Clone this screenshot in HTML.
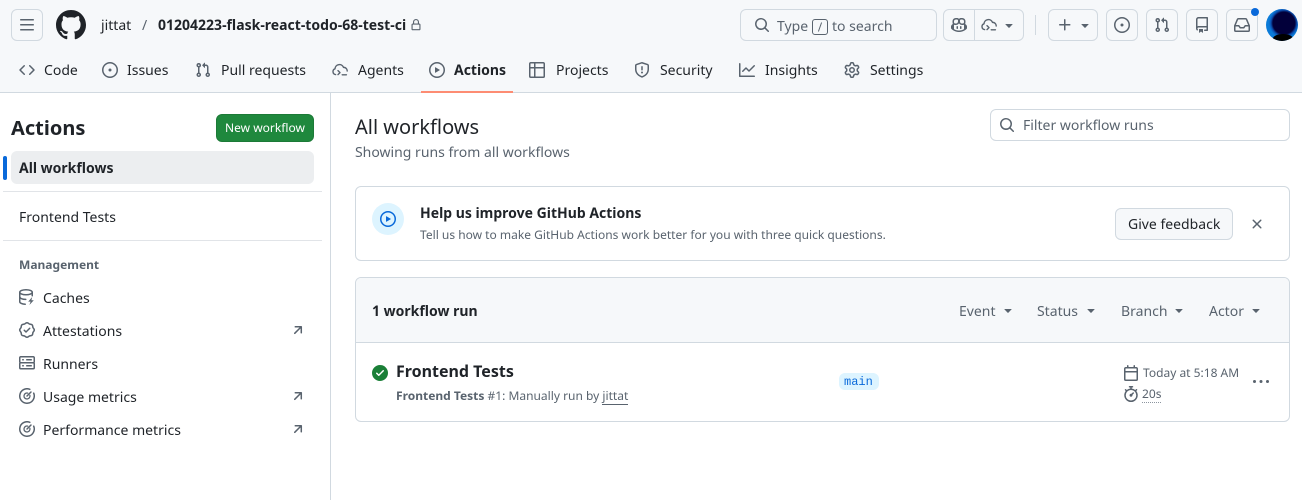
<!DOCTYPE html>
<html lang="en"><head><meta charset="utf-8"><title>Workflow runs</title>
<style>
html,body{margin:0;padding:0;background:#fff}
body{width:1302px;height:500px;position:relative;overflow:hidden;font-family:"Noto Sans","Liberation Sans","Noto Sans CJK JP",sans-serif;font-size:14px;color:#1f2328}
.t{position:absolute;white-space:nowrap;line-height:20px;height:20px}
.b{position:absolute;box-sizing:border-box;border:1px solid #d1d9e0;border-radius:6px}
.r{position:absolute}
svg{position:absolute;fill:#59636e;overflow:visible}
.m{color:#59636e}
.w{font-weight:700}
</style></head><body>
<svg width="0" height="0" style="position:absolute"><defs>
<symbol id="caret" viewBox="0 0 16 16"><path d="m4.427 7.427 3.396 3.396a.25.25 0 0 0 .354 0l3.396-3.396A.25.25 0 0 0 11.396 7H4.604a.25.25 0 0 0-.177.427Z"/></symbol>
<symbol id="issue" viewBox="0 0 16 16"><path d="M8 9.5a1.5 1.5 0 1 0 0-3 1.5 1.5 0 0 0 0 3Z"/><path d="M8 0a8 8 0 1 1 0 16A8 8 0 0 1 8 0ZM1.5 8a6.5 6.5 0 1 0 13 0 6.5 6.5 0 0 0-13 0Z"/></symbol>
<symbol id="pr" viewBox="0 0 16 16"><path d="M1.5 3.25a2.25 2.25 0 1 1 3 2.122v5.256a2.251 2.251 0 1 1-1.5 0V5.372A2.25 2.25 0 0 1 1.5 3.25Zm5.677-.177L9.573.677A.25.25 0 0 1 10 .854V2.5h1A2.5 2.5 0 0 1 13.5 5v5.628a2.251 2.251 0 1 1-1.5 0V5a1 1 0 0 0-1-1h-1v1.646a.25.25 0 0 1-.427.177L7.177 3.427a.25.25 0 0 1 0-.354ZM3.75 2.5a.75.75 0 1 0 0 1.5.75.75 0 0 0 0-1.5Zm0 9.5a.75.75 0 1 0 0 1.5.75.75 0 0 0 0-1.5Zm8.25.75a.75.75 0 1 0 1.5 0 .75.75 0 0 0-1.5 0Z"/></symbol>
<symbol id="play" viewBox="0 0 16 16"><path d="M8 0a8 8 0 1 1 0 16A8 8 0 0 1 8 0ZM1.5 8a6.5 6.5 0 1 0 13 0 6.5 6.5 0 0 0-13 0Zm4.879-2.773 4.264 2.559a.25.25 0 0 1 0 .428l-4.264 2.559A.25.25 0 0 1 6 10.559V5.442a.25.25 0 0 1 .379-.215Z"/></symbol>
<symbol id="search" viewBox="0 0 16 16"><path d="M10.68 11.74a6 6 0 0 1-7.922-8.982 6 6 0 0 1 8.982 7.922l3.04 3.04a.749.749 0 0 1-.326 1.275.749.749 0 0 1-.734-.215ZM11.5 7a4.499 4.499 0 1 0-8.997 0A4.499 4.499 0 0 0 11.5 7Z"/></symbol>
<symbol id="agent" viewBox="0 0 16 16"><g fill="none" stroke="currentColor" stroke-width="1.4" stroke-linecap="round" stroke-linejoin="round"><path d="M3.6 12.6A3 3 0 0 1 3 6.8 4.4 4.4 0 0 1 11.5 5.4 3.4 3.4 0 0 1 15.2 9"/><path d="M6 8.6l2 2-2 2"/><path d="M10.2 12.8h4.2"/></g></symbol>
<symbol id="meter" viewBox="0 0 16 16"><g fill="none" stroke="#59636e" stroke-linecap="round"><path stroke-width="1.5" d="M14.7 5.2A7.25 7.25 0 1 1 10.8 1.3"/><path stroke-width="1.3" d="M10.9 7.3A3 3 0 1 1 8.7 5.1"/><path stroke-width="1.5" d="M8 8l4-4"/></g></symbol>
<symbol id="arrow" viewBox="0 0 16 16"><path d="M4.53 4.75A.75.75 0 0 1 5.28 4h6.01a.75.75 0 0 1 .75.75v6.01a.75.75 0 0 1-1.5 0v-4.2l-5.26 5.261a.749.749 0 0 1-1.275-.326.749.749 0 0 1 .215-.734L9.48 5.5h-4.2a.75.75 0 0 1-.75-.75Z"/></symbol>
</defs></svg>

<!-- header -->
<div class="r" style="left:0;top:0;width:1302px;height:92px;background:#f6f8fa"></div>
<div class="r" style="left:0;top:92px;width:1302px;height:1px;background:#d1d9e0"></div>

<div class="b" style="left:11px;top:9px;width:32px;height:32px"></div>
<svg style="left:19px;top:17px" width="16" height="16" viewBox="0 0 16 16"><path d="M1 2.75A.75.75 0 0 1 1.75 2h12.5a.75.75 0 0 1 0 1.5H1.75A.75.75 0 0 1 1 2.75Zm0 5A.75.75 0 0 1 1.75 7h12.5a.75.75 0 0 1 0 1.5H1.75A.75.75 0 0 1 1 7.75ZM1.75 12h12.5a.75.75 0 0 1 0 1.5H1.75a.75.75 0 0 1 0-1.5Z"/></svg>
<svg style="left:56px;top:10px;fill:#1f2328" width="30" height="30" viewBox="0 0 16 16"><path d="M8 0c4.42 0 8 3.58 8 8a8.013 8.013 0 0 1-5.45 7.59c-.4.08-.55-.17-.55-.38 0-.27.01-1.13.01-2.2 0-.75-.25-1.23-.54-1.48 1.78-.2 3.65-.88 3.65-3.95 0-.88-.31-1.59-.82-2.15.08-.2.36-1.02-.08-2.12 0 0-.67-.22-2.2.82-.64-.18-1.32-.27-2-.27-.68 0-1.36.09-2 .27-1.53-1.03-2.2-.82-2.2-.82-.44 1.1-.16 1.92-.08 2.12-.51.56-.82 1.28-.82 2.15 0 3.06 1.86 3.75 3.64 3.95-.23.2-.44.55-.51 1.07-.46.21-1.61.55-2.33-.66-.15-.24-.6-.83-1.23-.82-.67.01-.27.38.01.53.34.19.73.9.82 1.13.16.45.68 1.31 2.69.94 0 .67.01 1.3.01 1.49 0 .21-.15.45-.55.38A7.995 7.995 0 0 1 0 8c0-4.42 3.58-8 8-8Z"/></svg>
<span class="t" style="left:101px;top:16px">jittat</span>
<span class="t m" style="left:142px;top:16px">/</span>
<span class="t w" style="left:158px;top:16px">01204223-flask-react-todo-68-test-ci</span>
<svg style="left:410px;top:19px" width="12" height="12" viewBox="0 0 16 16"><path d="M4 4a4 4 0 0 1 8 0v2h.25c.966 0 1.75.784 1.75 1.75v5.5A1.75 1.75 0 0 1 12.25 15h-8.5A1.75 1.75 0 0 1 2 13.25v-5.5C2 6.784 2.784 6 3.75 6H4Zm8.25 3.5h-8.5a.25.25 0 0 0-.25.25v5.5c0 .138.112.25.25.25h8.5a.25.25 0 0 0 .25-.25v-5.5a.25.25 0 0 0-.25-.25ZM10.5 6V4a2.5 2.5 0 1 0-5 0v2Z"/></svg>

<div class="b" style="left:740px;top:9px;width:197px;height:32px"></div>
<svg style="left:754px;top:17px" width="16" height="16"><use href="#search"/></svg>
<span class="t m" style="left:777px;top:17px">Type</span>
<div class="b" style="left:812px;top:19px;width:16px;height:16px;border-color:#59636e;border-radius:3px"></div>
<svg style="left:816px;top:22px" width="8" height="10"><path d="M5.6 .5 2.4 9.5" stroke="#59636e" stroke-width="1" fill="none"/></svg>
<span class="t m" style="left:832px;top:17px">to search</span>

<div class="b" style="left:943px;top:9px;width:81px;height:32px"></div>
<div class="r" style="left:974px;top:10px;width:1px;height:30px;background:#d1d9e0"></div>
<svg style="left:951px;top:17px" width="16" height="16" viewBox="0 0 16 16"><path d="M7.998 15.035c-4.562 0-7.873-2.914-7.998-3.749V9.338c.085-.628.677-1.686 1.588-2.065.013-.07.024-.143.036-.218.029-.183.06-.384.126-.612-.201-.508-.254-1.084-.254-1.656 0-.87.128-1.769.693-2.484.579-.733 1.494-1.124 2.724-1.261 1.206-.134 2.262.034 2.944.765.05.053.096.108.139.165.044-.057.094-.112.143-.165.682-.731 1.738-.899 2.944-.765 1.23.137 2.145.528 2.724 1.261.566.715.693 1.614.693 2.484 0 .572-.053 1.148-.254 1.656.066.228.098.429.126.612.012.076.024.148.037.218.924.385 1.522 1.471 1.591 2.095v1.872c0 .766-3.351 3.795-8.002 3.795Zm0-1.485c2.28 0 4.584-1.11 5.002-1.433V7.862l-.023-.116c-.49.21-1.075.291-1.727.291-1.146 0-2.059-.327-2.71-.991A3.222 3.222 0 0 1 8 6.303a3.24 3.24 0 0 1-.544.743c-.65.664-1.563.991-2.71.991-.652 0-1.236-.081-1.727-.291l-.023.116v4.255c.419.323 2.722 1.433 5.002 1.433ZM6.762 2.83c-.193-.206-.637-.413-1.682-.297-1.019.113-1.479.404-1.713.7-.247.312-.369.789-.369 1.554 0 .793.129 1.171.308 1.371.162.181.519.379 1.442.379.853 0 1.339-.235 1.638-.54.315-.322.527-.827.617-1.553.117-.935-.037-1.395-.241-1.614Zm4.155-.297c-1.044-.116-1.488.091-1.681.297-.204.219-.359.679-.242 1.614.091.726.303 1.231.618 1.553.299.305.784.54 1.638.54.922 0 1.28-.198 1.442-.379.179-.2.308-.578.308-1.371 0-.765-.123-1.242-.37-1.554-.233-.296-.693-.587-1.713-.7Z"/><path d="M6.25 9.037a.75.75 0 0 1 .75.75v1.501a.75.75 0 0 1-1.5 0V9.787a.75.75 0 0 1 .75-.75Zm4.25.75v1.501a.75.75 0 0 1-1.5 0V9.787a.75.75 0 0 1 1.5 0Z"/></svg>
<svg style="left:981px;top:17px;color:#59636e;fill:none" width="16" height="16"><use href="#agent"/></svg>
<svg style="left:1001px;top:17px" width="16" height="16"><use href="#caret"/></svg>
<div class="r" style="left:1035px;top:15px;width:1px;height:20px;background:#d1d9e0"></div>

<div class="b" style="left:1048px;top:9px;width:50px;height:32px"></div>
<svg style="left:1057px;top:17px" width="16" height="16" viewBox="0 0 16 16"><path d="M7.75 2a.75.75 0 0 1 .75.75V7h4.25a.75.75 0 0 1 0 1.5H8.5v4.25a.75.75 0 0 1-1.5 0V8.5H2.75a.75.75 0 0 1 0-1.5H7V2.75A.75.75 0 0 1 7.75 2Z"/></svg>
<svg style="left:1077px;top:17px" width="16" height="16"><use href="#caret"/></svg>
<div class="b" style="left:1106px;top:9px;width:32px;height:32px"></div>
<svg style="left:1114px;top:17px" width="16" height="16"><use href="#issue"/></svg>
<div class="b" style="left:1146px;top:9px;width:32px;height:32px"></div>
<svg style="left:1154px;top:17px" width="16" height="16"><use href="#pr"/></svg>
<div class="b" style="left:1186px;top:9px;width:32px;height:32px"></div>
<svg style="left:1194px;top:17px" width="16" height="16" viewBox="0 0 16 16"><path d="M2 2.5A2.5 2.5 0 0 1 4.5 0h8.75a.75.75 0 0 1 .75.75v12.5a.75.75 0 0 1-.75.75h-2.5a.75.75 0 0 1 0-1.5h1.75v-2h-8a1 1 0 0 0-.714 1.7.75.75 0 1 1-1.072 1.05A2.495 2.495 0 0 1 2 11.5Zm10.5-1h-8a1 1 0 0 0-1 1v6.708A2.486 2.486 0 0 1 4.5 9h8ZM5 12.25a.25.25 0 0 1 .25-.25h3.5a.25.25 0 0 1 .25.25v3.25a.25.25 0 0 1-.4.2l-1.45-1.087a.249.249 0 0 0-.3 0L5.4 15.7a.25.25 0 0 1-.4-.2Z"/></svg>
<div class="b" style="left:1226px;top:9px;width:32px;height:32px"></div>
<svg style="left:1234px;top:17px" width="16" height="16" viewBox="0 0 16 16"><path d="M2.8 2.06A1.75 1.75 0 0 1 4.41 1h7.18c.7 0 1.333.417 1.61 1.06l2.74 6.395c.04.093.06.194.06.295v4.5A1.75 1.75 0 0 1 14.25 15H1.75A1.75 1.75 0 0 1 0 13.25v-4.5c0-.101.02-.202.06-.295Zm1.61.44a.25.25 0 0 0-.23.152L1.887 8H4.75a.75.75 0 0 1 .6.3L6.625 10h2.75l1.275-1.7a.75.75 0 0 1 .6-.3h2.863L11.82 2.652a.25.25 0 0 0-.23-.152Zm10.09 7h-2.875l-1.275 1.7a.75.75 0 0 1-.6.3h-3.5a.75.75 0 0 1-.6-.3L4.375 9.5H1.5v3.75c0 .138.112.25.25.25h12.5a.25.25 0 0 0 .25-.25Z"/></svg>
<div class="r" style="left:1251px;top:8px;width:8px;height:8px;border-radius:50%;background:#0969da"></div>
<div class="r" style="left:1266px;top:9px;width:32px;height:32px;border-radius:50%;background:radial-gradient(circle 20px at 56% 44%,#02003a 0,#02003a 11px,#0b4fb0 13px,#0a7bd8 15px);overflow:hidden"><div class="r" style="left:7px;top:25px;width:20px;height:9px;background:#000;border-radius:50%"></div></div>

<!-- tabs -->
<svg style="left:19px;top:62px" width="16" height="16" viewBox="0 0 16 16"><path d="m11.28 3.22 4.25 4.25a.75.75 0 0 1 0 1.06l-4.25 4.25a.749.749 0 0 1-1.275-.326.749.749 0 0 1 .215-.734L13.94 8l-3.72-3.72a.749.749 0 0 1 .326-1.275.749.749 0 0 1 .734.215Zm-6.56 0a.751.751 0 0 1 1.042.018.751.751 0 0 1 .018 1.042L2.06 8l3.72 3.72a.749.749 0 0 1-.326 1.275.749.749 0 0 1-.734-.215L.47 8.53a.75.75 0 0 1 0-1.06Z"/></svg>
<span class="t" style="left:44px;top:61px">Code</span>
<svg style="left:102px;top:62px" width="16" height="16"><use href="#issue"/></svg>
<span class="t" style="left:127px;top:61px">Issues</span>
<svg style="left:195px;top:62px" width="16" height="16"><use href="#pr"/></svg>
<span class="t" style="left:221px;top:61px">Pull requests</span>
<svg style="left:332px;top:62px;color:#59636e;fill:none" width="16" height="16"><use href="#agent"/></svg>
<span class="t" style="left:358px;top:61px">Agents</span>
<svg style="left:429px;top:62px" width="16" height="16"><use href="#play"/></svg>
<span class="t w" style="left:454px;top:61px">Actions</span>
<div class="r" style="left:421px;top:91px;width:92px;height:2px;background:#fd8c73"></div>
<svg style="left:529px;top:62px" width="16" height="16" viewBox="0 0 16 16"><path d="M0 1.75C0 .784.784 0 1.75 0h12.5C15.216 0 16 .784 16 1.75v12.5A1.75 1.75 0 0 1 14.25 16H1.75A1.75 1.75 0 0 1 0 14.25ZM6.5 6.5v8h7.75a.25.25 0 0 0 .25-.25V6.5Zm8-1.5V1.75a.25.25 0 0 0-.25-.25H6.5V5Zm-13 1.5v7.75c0 .138.112.25.25.25H5v-8ZM5 5V1.5H1.75a.25.25 0 0 0-.25.25V5Z"/></svg>
<span class="t" style="left:556px;top:61px">Projects</span>
<svg style="left:634px;top:62px" width="16" height="16" viewBox="0 0 16 16"><path d="M7.467.133a1.748 1.748 0 0 1 1.066 0l5.25 1.68A1.75 1.75 0 0 1 15 3.48V7c0 1.566-.32 3.182-1.303 4.682-.983 1.498-2.585 2.813-5.032 3.855a1.697 1.697 0 0 1-1.33 0c-2.447-1.042-4.049-2.357-5.032-3.855C1.32 10.182 1 8.566 1 7V3.48a1.75 1.75 0 0 1 1.217-1.667Zm.61 1.429a.25.25 0 0 0-.153 0l-5.25 1.68a.25.25 0 0 0-.174.238V7c0 1.358.275 2.666 1.057 3.86.784 1.194 2.121 2.34 4.366 3.297a.196.196 0 0 0 .154 0c2.245-.956 3.582-2.104 4.366-3.298C13.225 9.666 13.5 8.36 13.5 7V3.48a.251.251 0 0 0-.174-.237l-5.25-1.68ZM8.75 4.75v3a.75.75 0 0 1-1.5 0v-3a.75.75 0 0 1 1.5 0ZM9 10.5a1 1 0 1 1-2 0 1 1 0 0 1 2 0Z"/></svg>
<span class="t" style="left:660px;top:61px">Security</span>
<svg style="left:739px;top:62px" width="16" height="16" viewBox="0 0 16 16"><path d="M1.5 1.75V13.5h13.75a.75.75 0 0 1 0 1.5H.75a.75.75 0 0 1-.75-.75V1.75a.75.75 0 0 1 1.5 0Zm14.28 2.53-5.25 5.25a.75.75 0 0 1-1.06 0L7 7.06 4.28 9.78a.751.751 0 0 1-1.042-.018.751.751 0 0 1-.018-1.042l3.25-3.25a.75.75 0 0 1 1.06 0L10 7.94l4.72-4.72a.751.751 0 0 1 1.042.018.751.751 0 0 1 .018 1.042Z"/></svg>
<span class="t" style="left:765px;top:61px">Insights</span>
<svg style="left:844px;top:62px" width="16" height="16" viewBox="0 0 16 16"><path d="M8 0a8.2 8.2 0 0 1 .701.031C9.444.095 9.99.645 10.16 1.29l.288 1.107c.018.066.079.158.212.224.231.114.454.243.668.386.123.082.233.09.299.071l1.103-.303c.644-.176 1.392.021 1.82.63.27.385.506.792.704 1.218.315.675.111 1.422-.364 1.891l-.814.806c-.049.048-.098.147-.088.294.016.257.016.515 0 .772-.01.147.038.246.088.294l.814.806c.475.469.679 1.216.364 1.891a7.977 7.977 0 0 1-.704 1.217c-.428.61-1.176.807-1.82.63l-1.102-.302c-.067-.019-.177-.011-.3.071a5.909 5.909 0 0 1-.668.386c-.133.066-.194.158-.211.224l-.29 1.106c-.168.646-.715 1.196-1.458 1.26a8.006 8.006 0 0 1-1.402 0c-.743-.064-1.289-.614-1.458-1.26l-.289-1.106c-.018-.066-.079-.158-.212-.224a5.738 5.738 0 0 1-.668-.386c-.123-.082-.233-.09-.299-.071l-1.103.303c-.644.176-1.392-.021-1.82-.63a8.12 8.12 0 0 1-.704-1.218c-.315-.675-.111-1.422.363-1.891l.815-.806c.05-.048.098-.147.088-.294a6.214 6.214 0 0 1 0-.772c.01-.147-.038-.246-.088-.294l-.815-.806C.635 6.045.431 5.298.746 4.623a7.92 7.92 0 0 1 .704-1.217c.428-.61 1.176-.807 1.82-.63l1.102.302c.067.019.177.011.3-.071.214-.143.437-.272.668-.386.133-.066.194-.158.211-.224l.29-1.106C6.009.645 6.556.095 7.299.03 7.53.01 7.764 0 8 0Zm-.571 1.525c-.036.003-.108.036-.137.146l-.289 1.105c-.147.561-.549.967-.998 1.189-.173.086-.34.183-.5.29-.417.278-.97.423-1.529.27l-1.103-.303c-.109-.03-.175.016-.195.045-.22.312-.412.644-.573.99-.014.031-.021.11.059.19l.815.806c.411.406.562.957.53 1.456a4.709 4.709 0 0 0 0 .582c.032.499-.119 1.05-.53 1.456l-.815.806c-.081.08-.073.159-.059.19.162.346.353.677.573.989.02.03.085.076.195.046l1.102-.303c.56-.153 1.113-.008 1.53.27.161.107.328.204.501.29.447.222.85.629.997 1.189l.289 1.105c.029.109.101.143.137.146a6.6 6.6 0 0 0 1.142 0c.036-.003.108-.036.137-.146l.289-1.105c.147-.561.549-.967.998-1.189.173-.086.34-.183.5-.29.417-.278.97-.423 1.529-.27l1.103.303c.109.029.175-.016.195-.045.22-.313.411-.644.573-.99.014-.031.021-.11-.059-.19l-.815-.806c-.411-.406-.562-.957-.53-1.456a4.709 4.709 0 0 0 0-.582c-.032-.499.119-1.05.53-1.456l.815-.806c.081-.08.073-.159.059-.19a6.464 6.464 0 0 0-.573-.989c-.02-.03-.085-.076-.195-.046l-1.102.303c-.56.153-1.113.008-1.53-.27a4.44 4.44 0 0 0-.501-.29c-.447-.222-.85-.629-.997-1.189l-.289-1.105c-.029-.11-.101-.143-.137-.146a6.6 6.6 0 0 0-1.142 0ZM11 8a3 3 0 1 1-6 0 3 3 0 0 1 6 0ZM9.5 8a1.5 1.5 0 1 0-3.001.001A1.5 1.5 0 0 0 9.5 8Z"/></svg>
<span class="t" style="left:870px;top:61px">Settings</span>

<!-- sidebar -->
<div class="r" style="left:330px;top:93px;width:1px;height:407px;background:#d1d9e0"></div>
<span class="t w" style="left:11px;top:118px;font-size:20px">Actions</span>
<div class="r" style="left:216px;top:114px;width:98px;height:28px;background:#1f883d;border-radius:6px;box-sizing:border-box;border:1px solid #1c7a37"></div>
<span class="t" style="left:225px;top:118px;font-size:12px;color:#fff">New workflow</span>
<div class="r" style="left:11px;top:151px;width:303px;height:33px;background:#eceef0;border-radius:6px"></div>
<div class="r" style="left:3px;top:156px;width:4px;height:24px;background:#0969da;border-radius:2px"></div>
<span class="t w" style="left:19px;top:159px">All workflows</span>
<div class="r" style="left:3px;top:191px;width:319px;height:1px;background:#e1e4e8"></div>
<span class="t" style="left:19px;top:208px">Frontend Tests</span>
<div class="r" style="left:3px;top:240px;width:319px;height:1px;background:#e1e4e8"></div>
<span class="t m w" style="left:19px;top:255px;font-size:12px">Management</span>

<svg style="left:19px;top:289px;fill:none" width="16" height="16" viewBox="0 0 16 16"><g stroke="#59636e" stroke-width="1.5" fill="none" stroke-linecap="round" stroke-linejoin="round"><ellipse cx="7" cy="3.25" rx="6.25" ry="2.5"/><path d="M.75 3.25v9.5c0 1.3 2.4 2.4 5.5 2.5"/><path d="M13.25 3.25v3.5"/><path d="M.75 8c.5 1.4 2.9 2.4 6 2.4"/></g><path d="M13.2 8 9.2 12.6h2.4l-1.2 3.4 4.4-4.8h-2.4z" fill="#59636e"/></svg>
<span class="t" style="left:43px;top:289px">Caches</span>
<svg style="left:19px;top:322px" width="16" height="16" viewBox="0 0 16 16"><path d="m9.585.52.929.68c.153.112.331.186.518.215l1.138.175a2.678 2.678 0 0 1 2.24 2.24l.174 1.139c.029.187.103.365.215.518l.68.928a2.677 2.677 0 0 1 0 3.17l-.68.928a1.174 1.174 0 0 0-.215.518l-.175 1.138a2.678 2.678 0 0 1-2.241 2.241l-1.138.175a1.17 1.17 0 0 0-.518.215l-.928.68a2.677 2.677 0 0 1-3.17 0l-.928-.68a1.174 1.174 0 0 0-.518-.215L3.83 14.41a2.678 2.678 0 0 1-2.24-2.24l-.175-1.138a1.17 1.17 0 0 0-.215-.518l-.68-.928a2.677 2.677 0 0 1 0-3.17l.68-.928c.112-.153.186-.331.215-.518l.175-1.14a2.678 2.678 0 0 1 2.24-2.24l1.139-.175c.187-.029.365-.103.518-.215l.928-.68a2.677 2.677 0 0 1 3.17 0ZM7.303 1.728l-.927.68a2.67 2.67 0 0 1-1.18.489l-1.137.174a1.179 1.179 0 0 0-.987.987l-.174 1.136a2.677 2.677 0 0 1-.489 1.18l-.68.928a1.18 1.18 0 0 0 0 1.394l.68.927c.256.348.424.753.489 1.18l.174 1.137c.078.509.478.909.987.987l1.136.174a2.67 2.67 0 0 1 1.18.489l.928.68c.414.305.979.305 1.394 0l.927-.68a2.67 2.67 0 0 1 1.18-.489l1.137-.174a1.18 1.18 0 0 0 .987-.987l.174-1.136a2.67 2.67 0 0 1 .489-1.18l.68-.928a1.176 1.176 0 0 0 0-1.394l-.68-.927a2.686 2.686 0 0 1-.489-1.18l-.174-1.137a1.179 1.179 0 0 0-.987-.987l-1.136-.174a2.677 2.677 0 0 1-1.18-.489l-.928-.68a1.176 1.176 0 0 0-1.394 0ZM11.28 6.78l-3.75 3.75a.75.75 0 0 1-1.06 0L4.72 8.78a.751.751 0 0 1 .018-1.042.751.751 0 0 1 1.042-.018l1.22 1.22 3.22-3.22a.751.751 0 0 1 1.042.018.751.751 0 0 1 .018 1.042Z"/></svg>
<span class="t" style="left:43px;top:322px">Attestations</span>
<svg style="left:290px;top:322px" width="16" height="16"><use href="#arrow"/></svg>
<svg style="left:19px;top:355px" width="16" height="16" viewBox="0 0 16 16"><path d="M1.75 1h12.5c.966 0 1.75.784 1.75 1.75v4c0 .372-.116.717-.314 1 .198.283.314.628.314 1v4a1.75 1.75 0 0 1-1.75 1.75H1.75A1.75 1.75 0 0 1 0 12.75v-4c0-.358.109-.707.314-1a1.739 1.739 0 0 1-.314-1v-4C0 1.784.784 1 1.75 1ZM1.5 2.75v4c0 .138.112.25.25.25h12.5a.25.25 0 0 0 .25-.25v-4a.25.25 0 0 0-.25-.25H1.75a.25.25 0 0 0-.25.25Zm.25 5.75a.25.25 0 0 0-.25.25v4c0 .138.112.25.25.25h12.5a.25.25 0 0 0 .25-.25v-4a.25.25 0 0 0-.25-.25ZM7 4.75A.75.75 0 0 1 7.75 4h4.5a.75.75 0 0 1 0 1.5h-4.5A.75.75 0 0 1 7 4.75ZM7.75 10h4.5a.75.75 0 0 1 0 1.5h-4.5a.75.75 0 0 1 0-1.5ZM3 4.75A.75.75 0 0 1 3.75 4h.5a.75.75 0 0 1 0 1.5h-.5A.75.75 0 0 1 3 4.75ZM3.75 10h.5a.75.75 0 0 1 0 1.5h-.5a.75.75 0 0 1 0-1.5Z"/></svg>
<span class="t" style="left:43px;top:355px">Runners</span>
<svg style="left:19px;top:388px" width="16" height="16"><use href="#meter"/></svg>
<span class="t" style="left:43px;top:388px">Usage metrics</span>
<svg style="left:290px;top:388px" width="16" height="16"><use href="#arrow"/></svg>
<svg style="left:19px;top:421px" width="16" height="16"><use href="#meter"/></svg>
<span class="t" style="left:43px;top:421px">Performance metrics</span>
<svg style="left:290px;top:421px" width="16" height="16"><use href="#arrow"/></svg>

<!-- main -->
<span class="t" style="left:355px;top:117px;font-size:20px">All workflows</span>
<span class="t m" style="left:355px;top:143px">Showing runs from all workflows</span>
<div class="b" style="left:990px;top:109px;width:300px;height:32px"></div>
<svg style="left:999px;top:117px" width="16" height="16"><use href="#search"/></svg>
<span class="t m" style="left:1023px;top:116px">Filter workflow runs</span>

<div class="b" style="left:355px;top:186px;width:935px;height:75px"></div>
<div class="r" style="left:372px;top:203px;width:32px;height:32px;border-radius:50%;background:#ddf4ff"></div>
<svg style="left:380px;top:211px;fill:#0969da" width="16" height="16"><use href="#play"/></svg>
<span class="t w" style="left:420px;top:204px">Help us improve GitHub Actions</span>
<span class="t m" style="left:420px;top:225px;font-size:12px">Tell us how to make GitHub Actions work better for you with three quick questions.</span>
<div class="b" style="left:1115px;top:208px;width:118px;height:32px;background:#f6f8fa"></div>
<span class="t" style="left:1128px;top:215px">Give feedback</span>
<svg style="left:1249px;top:216px" width="16" height="16" viewBox="0 0 16 16"><path d="M3.72 3.72a.75.75 0 0 1 1.06 0L8 6.94l3.22-3.22a.749.749 0 0 1 1.275.326.749.749 0 0 1-.215.734L9.06 8l3.22 3.22a.749.749 0 0 1-.326 1.275.749.749 0 0 1-.734-.215L8 9.06l-3.22 3.22a.751.751 0 0 1-1.042-.018.751.751 0 0 1-.018-1.042L6.94 8 3.72 4.78a.75.75 0 0 1 0-1.06Z"/></svg>

<div class="b" style="left:355px;top:277px;width:935px;height:145px"></div>
<div class="r" style="left:356px;top:278px;width:933px;height:64px;background:#f6f8fa;border-radius:5px 5px 0 0"></div>
<div class="r" style="left:356px;top:342px;width:933px;height:1px;background:#d1d9e0"></div>
<span class="t w" style="left:372px;top:302px">1 workflow run</span>
<span class="t m" style="left:959px;top:302px">Event</span>
<svg style="left:1000px;top:302px" width="16" height="16"><use href="#caret"/></svg>
<span class="t m" style="left:1037px;top:302px">Status</span>
<svg style="left:1083px;top:302px" width="16" height="16"><use href="#caret"/></svg>
<span class="t m" style="left:1121px;top:302px">Branch</span>
<svg style="left:1171px;top:302px" width="16" height="16"><use href="#caret"/></svg>
<span class="t m" style="left:1209px;top:302px">Actor</span>
<svg style="left:1248px;top:302px" width="16" height="16"><use href="#caret"/></svg>

<svg style="left:372px;top:365px;fill:#1a7f37" width="16" height="16" viewBox="0 0 16 16"><path d="M8 16A8 8 0 1 1 8 0a8 8 0 0 1 0 16Zm3.78-9.72a.751.751 0 0 0-.018-1.042.751.751 0 0 0-1.042-.018L6.75 9.19 5.28 7.72a.751.751 0 0 0-1.042.018.751.751 0 0 0-.018 1.042l2 2a.75.75 0 0 0 1.06 0Z"/></svg>
<span class="t w" style="left:396px;top:361px;font-size:16px">Frontend Tests</span>
<span class="t m" style="left:396px;top:386px;font-size:12px"><b style="font-weight:700">Frontend Tests</b> #1: Manually run by <span style="border-bottom:1px solid #59636e">jittat</span></span>
<div class="r" style="left:839px;top:373px;width:40px;height:17px;background:#ddf4ff;border-radius:6px"></div>
<span class="t" style="left:844px;top:372px;font-family:'Liberation Mono',monospace;font-size:12px;color:#0969da">main</span>
<svg style="left:1123px;top:365px" width="16" height="16" viewBox="0 0 16 16"><path d="M4.75 0a.75.75 0 0 1 .75.75V2h5V.75a.75.75 0 0 1 1.5 0V2h1.25c.966 0 1.75.784 1.75 1.75v10.5A1.75 1.75 0 0 1 13.25 16H2.75A1.75 1.75 0 0 1 1 14.25V3.75C1 2.784 1.784 2 2.75 2H4V.75A.75.75 0 0 1 4.75 0ZM2.5 7.5v6.75c0 .138.112.25.25.25h10.5a.25.25 0 0 0 .25-.25V7.5Zm10.75-4H2.75a.25.25 0 0 0-.25.25V6h11V3.75a.25.25 0 0 0-.25-.25Z"/></svg>
<span class="t m" style="left:1143px;top:363px;font-size:12px">Today at 5:18 AM</span>
<svg style="left:1123px;top:386px" width="16" height="16" viewBox="0 0 16 16"><path d="M5.75.75A.75.75 0 0 1 6.5 0h3a.75.75 0 0 1 0 1.5h-.75v1l-.001.041a6.724 6.724 0 0 1 3.464 1.435l.007-.006.75-.75a.749.749 0 0 1 1.275.326.749.749 0 0 1-.215.734l-.75.75-.006.007a6.75 6.75 0 1 1-10.548 0L2.72 5.03l-.75-.75a.751.751 0 0 1 .018-1.042.751.751 0 0 1 1.042-.018l.75.75.007.006A6.72 6.72 0 0 1 7.25 2.541V1.5H6.5a.75.75 0 0 1-.75-.75ZM8 14.5a5.25 5.25 0 1 0-.001-10.501A5.25 5.25 0 0 0 8 14.5Zm.389-6.7 1.33-1.33a.75.75 0 1 1 1.061 1.06L9.45 8.861A1.503 1.503 0 0 1 8 10.75a1.499 1.499 0 1 1 .389-2.95Z"/></svg>
<span class="t m" style="left:1142px;top:384px;font-size:12px">20s</span>
<div class="r" style="left:1142px;top:402px;width:19px;height:0;border-top:1px dotted #8c959f"></div>
<svg style="left:1253px;top:374px" width="16" height="16" viewBox="0 0 16 16"><path d="M8 9a1.5 1.5 0 1 0 0-3 1.5 1.5 0 0 0 0 3ZM1.5 9a1.5 1.5 0 1 0 0-3 1.5 1.5 0 0 0 0 3Zm13 0a1.5 1.5 0 1 0 0-3 1.5 1.5 0 0 0 0 3Z"/></svg>
</body></html>
